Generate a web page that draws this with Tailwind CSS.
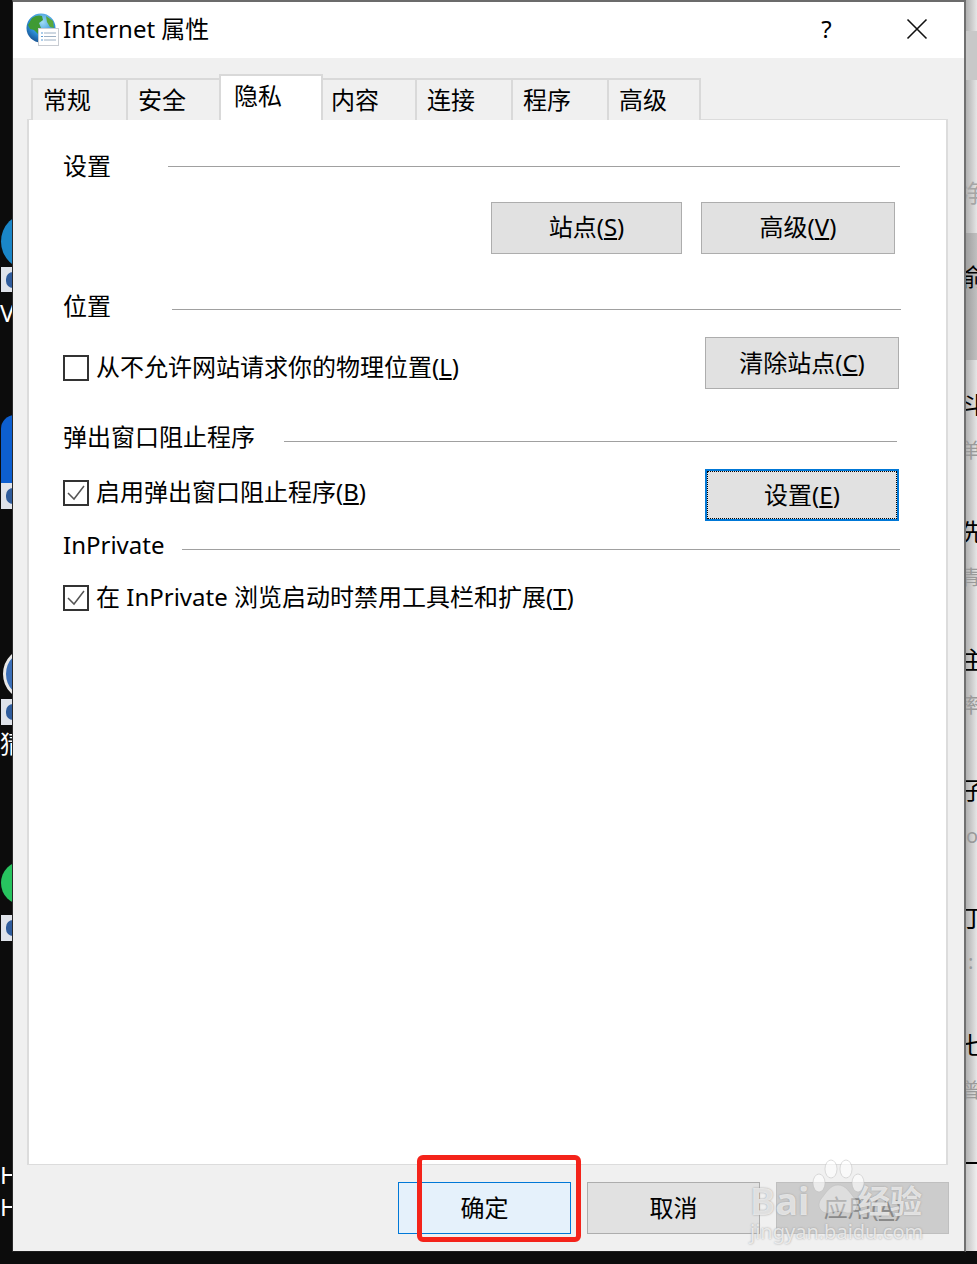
<!DOCTYPE html>
<html lang="zh-CN">
<head>
<meta charset="utf-8">
<meta name="viewport" content="width=device-width, initial-scale=1">
<title>Internet 属性</title>
<script src="https://cdn.jsdelivr.net/npm/@tailwindcss/browser@4"></script>
</head>
<body class="bg-black">
<div class="relative w-[977px] h-[1264px] overflow-hidden bg-[#0c0c0c] text-[24px] leading-[30px] text-black font-['Noto_Sans','Noto_Sans_CJK_SC',sans-serif]">

  <!-- desktop icons, left edge -->
  <div class="absolute left-[1px] top-[213px] w-[57px] h-[57px] rounded-full bg-[#1a86c8]"></div>
  <div class="absolute left-[1px] top-[267px] w-[24px] h-[25px] bg-[#dfe3ea]"><div class="mt-[5px] ml-[5px] w-[14px] h-[16px] rounded-full bg-[#2f5c9c]"></div></div>
  <div class="absolute left-0 top-[298px] text-white">V</div>
  <div class="absolute left-[1px] top-[415px] w-[30px] h-[68px] rounded-t-[14px] bg-[#0d5fd0]"></div>
  <div class="absolute left-[1px] top-[483px] w-[24px] h-[26px] bg-[#dfe3ea]"><div class="mt-[5px] ml-[5px] w-[14px] h-[16px] rounded-full bg-[#2f5c9c]"></div></div>
  <div class="absolute left-[3px] top-[647px] w-[54px] h-[54px] rounded-full border-[3px] border-[#e8e8e8] bg-[#3b6fb8]"></div>
  <div class="absolute left-[1px] top-[699px] w-[24px] h-[26px] bg-[#dfe3ea]"><div class="mt-[5px] ml-[5px] w-[14px] h-[16px] rounded-full bg-[#2f5c9c]"></div></div>
  <div class="absolute left-0 top-[729px] text-white">猜</div>
  <div class="absolute left-[1px] top-[861px] w-[44px] h-[44px] rounded-full bg-[#27c45f]"></div>
  <div class="absolute left-[1px] top-[915px] w-[24px] h-[26px] bg-[#dfe3ea]"><div class="mt-[5px] ml-[5px] w-[14px] h-[16px] rounded-full bg-[#2f5c9c]"></div></div>
  <div class="absolute left-0 top-[1160px] text-white">H</div>
  <div class="absolute left-0 top-[1192px] text-white">H</div>

  <!-- page behind the dialog, right edge -->
  <div class="absolute left-[964px] top-0 w-[13px] h-[1251px] bg-gradient-to-r from-[#a8a8a8] to-[#e6e6e6]"></div>
  <div class="absolute left-[964px] top-[31px] w-[13px] h-[49px] bg-[#c8c8c8]"></div>
  <div class="absolute left-[964px] top-[233px] w-[13px] h-[127px] bg-gradient-to-r from-[#9a9a9a] to-[#c0c0c0]"></div>
  <div class="absolute left-[964px] top-[1162px] w-[13px] h-[2px] bg-black"></div>
  <div class="absolute left-[964px] top-[1164px] w-[13px] h-[87px] bg-gradient-to-r from-[#bdbdbd] to-[#efefef]"></div>
  <div class="absolute left-[961px] top-[178px] text-[#a5a5a5]">净</div>
  <div class="absolute left-[961px] top-[262px]">俞</div>
  <div class="absolute left-[961px] top-[390px]">斗</div>
  <div class="absolute left-[961px] top-[436px] text-[20px] text-[#999]">单</div>
  <div class="absolute left-[961px] top-[517px]">先</div>
  <div class="absolute left-[961px] top-[563px] text-[20px] text-[#999]">青</div>
  <div class="absolute left-[961px] top-[645px]">主</div>
  <div class="absolute left-[961px] top-[691px] text-[20px] text-[#999]">率</div>
  <div class="absolute left-[961px] top-[775px]">子</div>
  <div class="absolute left-[966px] top-[821px] text-[20px] text-[#999]">o</div>
  <div class="absolute left-[961px] top-[903px]">丁</div>
  <div class="absolute left-[968px] top-[947px] text-[20px] text-[#999]">:</div>
  <div class="absolute left-[961px] top-[1030px]">七</div>
  <div class="absolute left-[961px] top-[1076px] text-[20px] text-[#999]">曾</div>

  <!-- dialog -->
  <div class="absolute left-[12px] top-0 w-[954px] h-[1252px] border-t-2 border-l border-r-2 border-b border-t-[#6b6b6b] border-l-[#2a2a2a] border-r-[#707070] border-b-[#1d1d1d] bg-[#f0f0f0] flex flex-col">

    <div class="h-[56px] bg-white flex items-center shrink-0">
      <svg class="ml-[13px] w-[34px] h-[34px] shrink-0" viewBox="0 0 34 34">
        <defs>
          <radialGradient id="globe" cx="0.55" cy="0.3" r="0.8">
            <stop offset="0" stop-color="#9fdcf5"/><stop offset="0.55" stop-color="#2d8fd8"/><stop offset="1" stop-color="#12427f"/>
          </radialGradient>
        </defs>
        <circle cx="15" cy="15" r="14.5" fill="url(#globe)"/>
        <path d="M6 5c4-3 8-3 10-2l1 4-4 3 2 5-3 6-4-4-4-1-2-4z" fill="#3f9a33"/>
        <path d="M20 3l7 5 1 7-4-1-3-5z" fill="#59a83a"/>
        <path d="M16 22l5-2 2 3-3 6-3-1z" fill="#3f9a33"/>
        <rect x="12.5" y="15.5" width="20" height="17" fill="#fff" stroke="#c8ccd2"/>
        <path d="M18 20h12M18 23.5h12M18 27h12" stroke="#9cb0c4"/>
        <path d="M15 20h2M15 23.5h2M15 27h2" stroke="#5a9bd4"/>
      </svg>
      <span class="ml-[3px] -mt-[2px]">Internet 属性</span>
      <span class="ml-[607px] w-[20px] text-center -mt-[2px]">?</span>
      <svg class="ml-[70px] w-[22px] h-[22px] -mt-[2px]" viewBox="0 0 22 22"><path d="M1.5 1.5l19 19M20.5 1.5l-19 19" stroke="#111" stroke-width="1.6" fill="none"/></svg>
    </div>

    <!-- tabs -->
    <div class="h-[62px] shrink-0 pl-[18px] flex items-end relative z-10 -mb-px">
      <div class="w-[95px] h-[42px] pl-[10px] pt-[5px] bg-[#f0f0f0] border-t-2 border-l-2 border-[#d9d9d9]">常规</div>
      <div class="w-[93px] h-[42px] pl-[10px] pt-[5px] bg-[#f0f0f0] border-t-2 border-l-2 border-[#d9d9d9]">安全</div>
      <div class="w-[104px] h-[46px] pl-[13px] pt-[5px] bg-white border-t-2 border-x-2 border-[#d9d9d9]">隐私</div>
      <div class="w-[92px] h-[42px] pl-[8px] pt-[5px] bg-[#f0f0f0] border-t-2 border-[#d9d9d9]">内容</div>
      <div class="w-[96px] h-[42px] pl-[10px] pt-[5px] bg-[#f0f0f0] border-t-2 border-l-2 border-[#d9d9d9]">连接</div>
      <div class="w-[96px] h-[42px] pl-[10px] pt-[5px] bg-[#f0f0f0] border-t-2 border-l-2 border-[#d9d9d9]">程序</div>
      <div class="w-[94px] h-[42px] pl-[10px] pt-[5px] bg-[#f0f0f0] border-t-2 border-x-2 border-[#d9d9d9]">高级</div>
    </div>

    <!-- privacy panel -->
    <div class="ml-[14px] w-[921px] h-[1046px] shrink-0 bg-white border-x-2 border-y border-[#dcdcdc] pl-[34px] pt-[32px]">

      <div class="flex items-center h-[30px]">
        <span class="-mt-[2px]">设置</span>
        <div class="ml-[57px] w-[732px] h-px bg-[#a0a0a0] -mt-[1px]"></div>
      </div>
      <div class="mt-[20px] flex h-[52px]">
        <button class="ml-[428px] w-[191px] h-[52px] pb-[2px] bg-[#e1e1e1] border border-[#adadad]">站点(<u>S</u>)</button>
        <button class="ml-[19px] w-[194px] h-[52px] pb-[2px] bg-[#e1e1e1] border border-[#adadad]">高级(<u>V</u>)</button>
      </div>

      <div class="mt-[38px] flex items-center h-[30px]">
        <span class="-mt-[2px]">位置</span>
        <div class="ml-[61px] w-[729px] h-px bg-[#a0a0a0] mt-[4px]"></div>
      </div>
      <div class="mt-[15px] flex items-start justify-between w-[836px] h-[52px]">
        <div class="flex items-center gap-[7px] mt-[16px]">
          <div class="w-[26px] h-[26px] border-2 border-[#333]"></div>
          <span class="-translate-y-px">从不允许网站请求你的物理位置(<u>L</u>)</span>
        </div>
        <button class="w-[194px] h-[52px] bg-[#e1e1e1] border border-[#adadad]">清除站点(<u>C</u>)</button>
      </div>

      <div class="mt-[34px] flex items-center h-[30px]">
        <span class="-mt-[2px]">弹出窗口阻止程序</span>
        <div class="ml-[29px] w-[613px] h-px bg-[#a0a0a0] mt-[6px]"></div>
      </div>
      <div class="mt-[16px] flex items-start justify-between w-[836px] h-[52px]">
        <div class="flex items-center gap-[7px] mt-[9px]">
          <div class="w-[26px] h-[26px] border-2 border-[#333] flex items-center justify-center">
            <svg class="w-[20px] h-[20px]" viewBox="0 0 20 20"><path d="M2 10l6 6L18 3" stroke="#555" stroke-width="1.5" fill="none"/></svg>
          </div>
          <span class="-translate-y-px">启用弹出窗口阻止程序(<u>B</u>)</span>
        </div>
        <button class="w-[194px] h-[52px] bg-[#e1e1e1] border-2 border-[#0078d7] outline-1 outline-dotted outline-black -outline-offset-[3px]">设置(<u>E</u>)</button>
      </div>

      <div class="mt-[10px] flex items-center h-[30px]">
        <span class="-mt-[2px]">InPrivate</span>
        <div class="ml-[18px] w-[718px] h-px bg-[#a0a0a0] mt-[6px]"></div>
      </div>
      <div class="mt-[22px] flex items-center gap-[7px]">
        <div class="w-[26px] h-[26px] border-2 border-[#333] flex items-center justify-center">
          <svg class="w-[20px] h-[20px]" viewBox="0 0 20 20"><path d="M2 10l6 6L18 3" stroke="#555" stroke-width="1.5" fill="none"/></svg>
        </div>
        <span class="-translate-y-px">在 InPrivate 浏览启动时禁用工具栏和扩展(<u>T</u>)</span>
      </div>
    </div>

    <!-- dialog buttons -->
    <div class="flex mt-[17px] pl-[385px] gap-[16px]">
      <button class="w-[173px] h-[52px] bg-[#e5f1fb] border border-[#0078d7]">确定</button>
      <button class="w-[173px] h-[52px] bg-[#e1e1e1] border border-[#adadad]">取消</button>
      <button class="w-[173px] h-[52px] bg-[#cccccc] border border-[#bfbfbf] text-[#8a8a8a]">应用(<u>A</u>)</button>
    </div>
  </div>

  <!-- red annotation -->
  <div class="absolute left-[417px] top-[1155px] w-[164px] h-[87px] rounded-[6px] border-[5px] border-[#f4231a]"></div>

  <!-- baidu watermark -->
  <svg class="absolute left-[806px] top-[1158px] w-[64px] h-[64px]" viewBox="0 0 64 64" fill="#fff" fill-opacity="0.6" stroke="#bbb" stroke-opacity="0.5">
    <ellipse cx="13" cy="25" rx="6" ry="9"/><ellipse cx="25" cy="11" rx="6" ry="9"/><ellipse cx="40" cy="11" rx="6" ry="9"/><ellipse cx="52" cy="25" rx="6" ry="9"/>
    <path d="M32 27c8 0 12 8 17 14 5 7 0 15-8 14-4-1-6-2-9-2s-5 1-9 2c-8 1-13-7-8-14 5-6 9-14 17-14z" fill-opacity="0.35"/>
  </svg>
  <div class="absolute left-[750px] top-[1178px] text-[38px] leading-[44px] font-bold text-white/70 [text-shadow:0_0_2px_#999]">Bai</div>
  <div class="absolute left-[858px] top-[1182px] text-[32px] leading-[38px] font-bold text-white/70 [text-shadow:0_0_2px_#999]">经验</div>
  <div class="absolute left-[750px] top-[1220px] text-[20px] leading-[24px] text-white/70 [text-shadow:0_0_2px_#999]">jingyan.baidu.com</div>
</div>
</body>
</html>
